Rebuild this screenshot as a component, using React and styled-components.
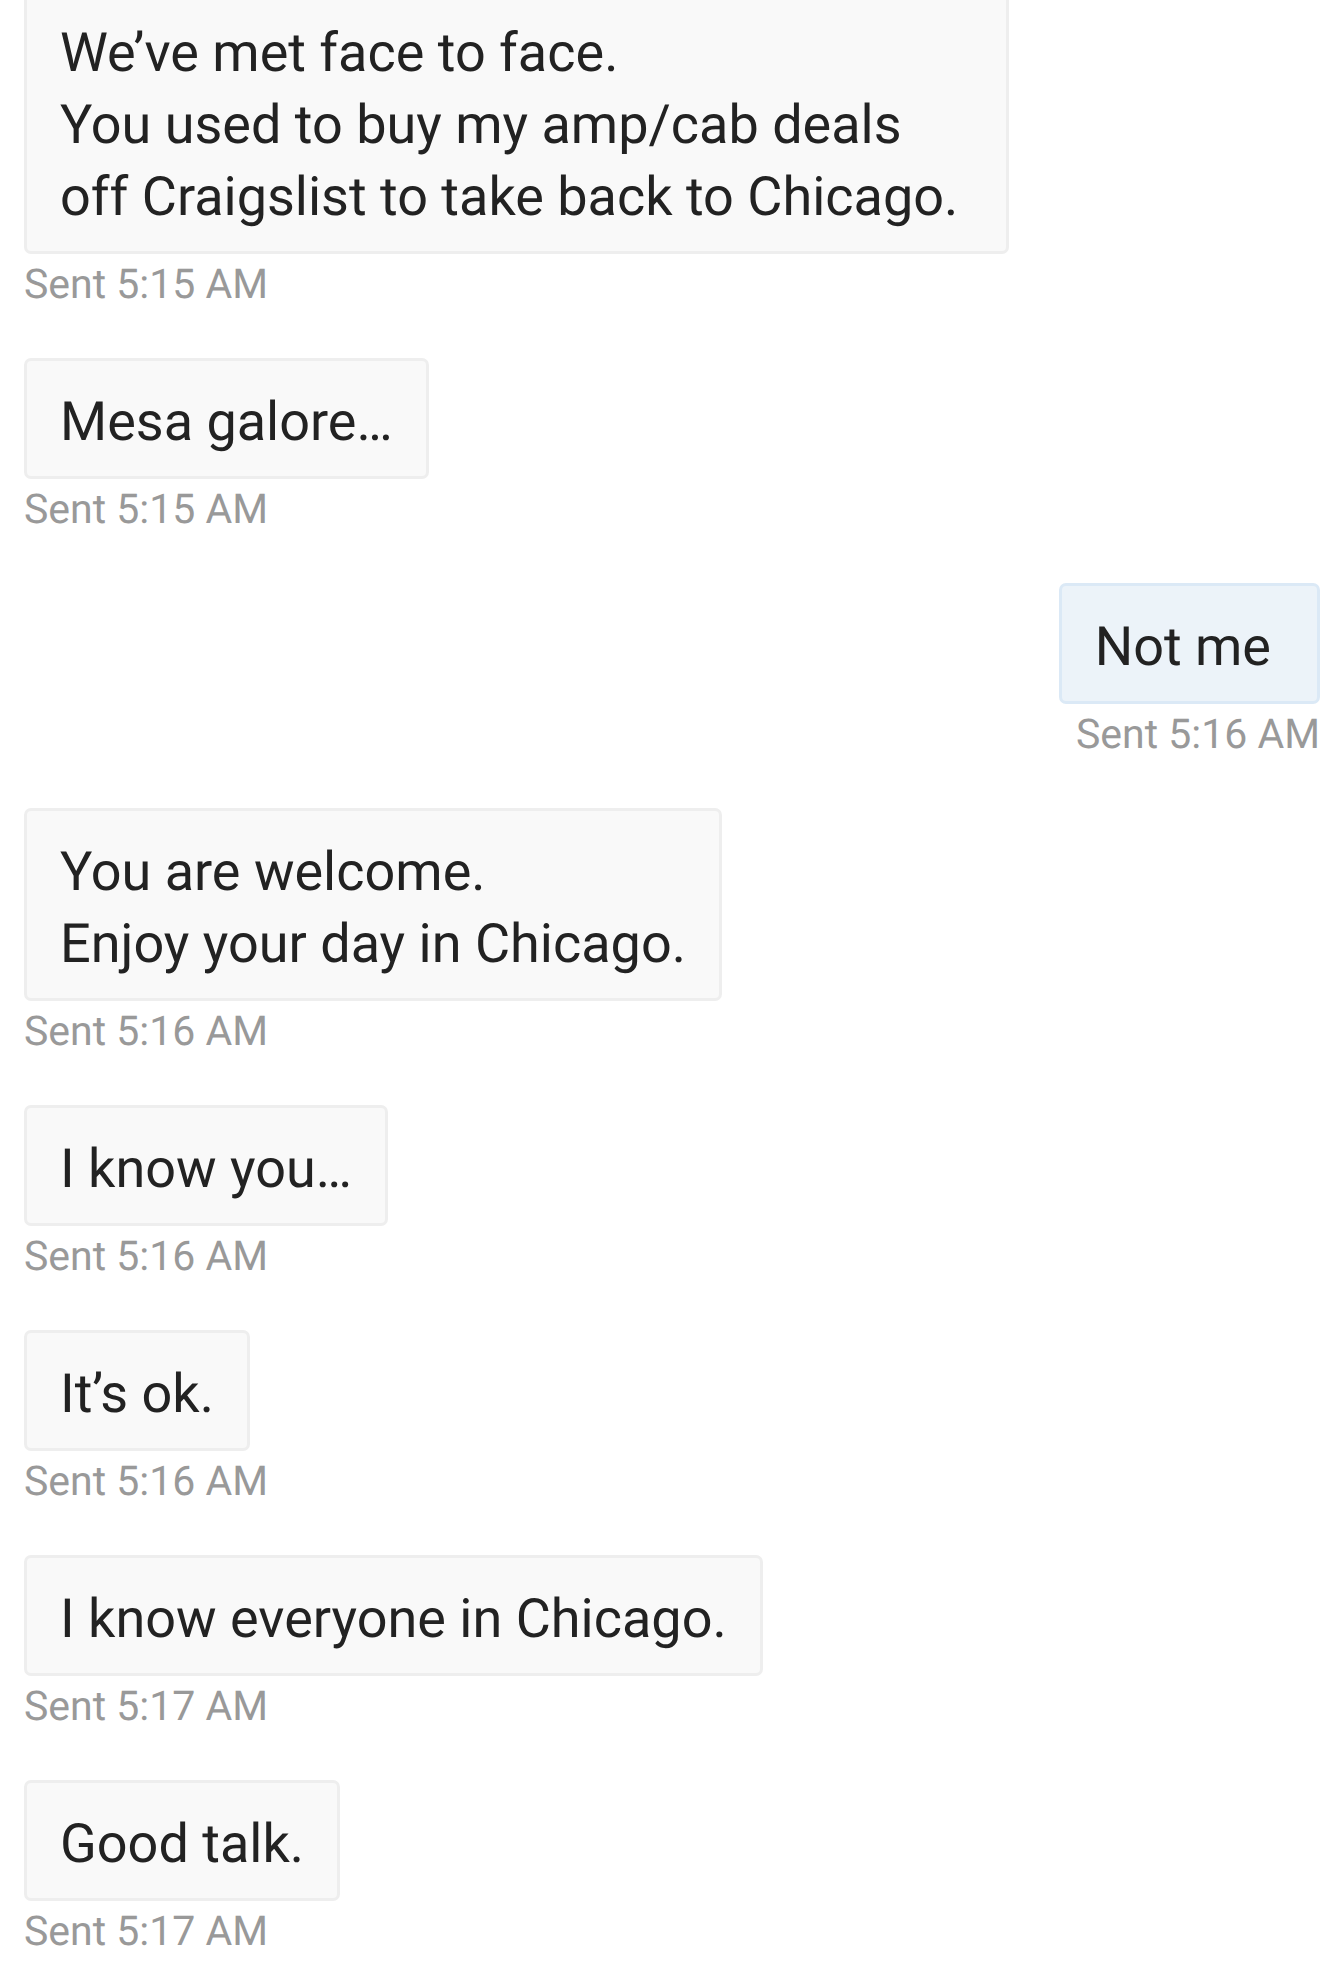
import React from "react";
import styled, { createGlobalStyle } from "styled-components";

const GlobalStyle = createGlobalStyle`
  body {
    margin: 0;
    background: #ffffff;
    font-family: Roboto, "Liberation Sans", sans-serif;
    text-rendering: geometricPrecision;
  }
`;

const Thread = styled.main`
  display: flex;
  flex-direction: column;
  gap: 48px;
  padding: 0 24px 16px;
`;

const Message = styled.article`
  display: flex;
  flex-direction: column;
  align-items: ${({ $own }) => ($own ? "flex-end" : "flex-start")};
`;

const Bubble = styled.p`
  box-sizing: border-box;
  max-width: 76%;
  margin: 0;
  padding: ${({ $continued }) => ($continued ? "18px" : "26px")} ${({ $own }) => ($own ? "46px" : "33px")} 17px 33px;
  border: 3px solid ${({ $own }) => ($own ? "#dbe9f6" : "#eeeeee")};
  border-top-width: ${({ $continued }) => ($continued ? "0" : "3px")};
  border-radius: ${({ $continued }) => ($continued ? "0 0 7px 7px" : "7px")};
  background: ${({ $own }) => ($own ? "#ecf3f9" : "#f9f9f9")};
  color: #222222;
  font-size: 54px;
  line-height: 72px;
  white-space: pre-line;
`;

const SentAt = styled.time`
  margin-top: 6px;
  color: #999999;
  font-size: 41px;
  line-height: 50px;
`;

const messages = [
  { text: "We’ve met face to face.\nYou used to buy my amp/cab deals off Craigslist to take back to Chicago.", time: "5:15 AM", continued: true },
  { text: "Mesa galore…", time: "5:15 AM" },
  { text: "Not me", time: "5:16 AM", own: true },
  { text: "You are welcome.\nEnjoy your day in Chicago.", time: "5:16 AM" },
  { text: "I know you…", time: "5:16 AM" },
  { text: "It’s ok.", time: "5:16 AM" },
  { text: "I know everyone in Chicago.", time: "5:17 AM" },
  { text: "Good talk.", time: "5:17 AM" },
];

export default function App() {
  return (
    <>
      <GlobalStyle />
      <Thread>
        {messages.map(({ text, time, own, continued }) => (
          <Message key={text} $own={own}>
            <Bubble $own={own} $continued={continued}>{text}</Bubble>
            <SentAt>Sent {time}</SentAt>
          </Message>
        ))}
      </Thread>
    </>
  );
}
